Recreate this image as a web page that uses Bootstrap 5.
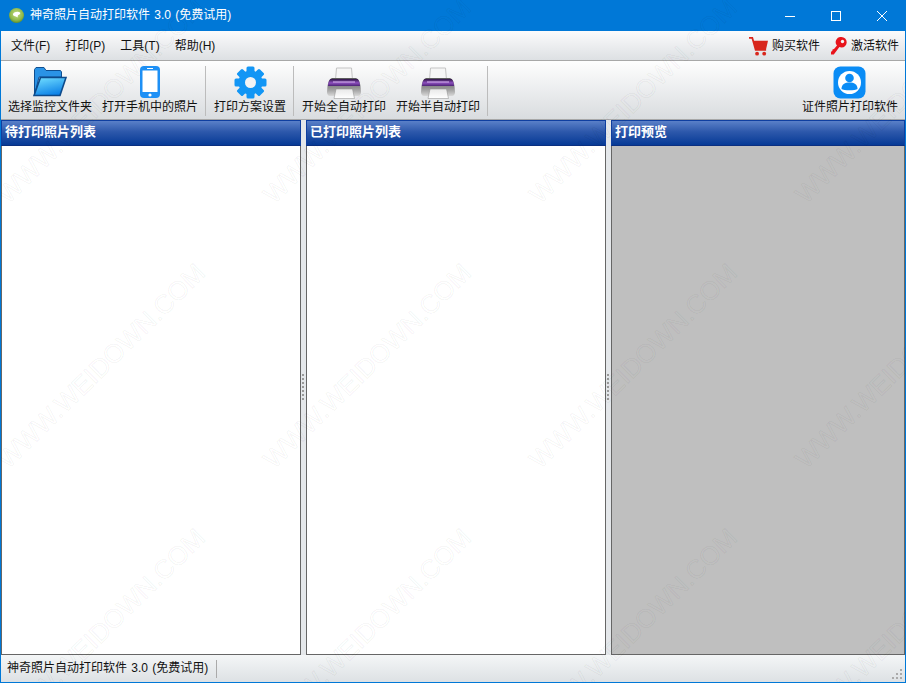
<!DOCTYPE html>
<html lang="zh"><head><meta charset="utf-8"><title>神奇照片自动打印软件</title>
<link href="https://cdn.jsdelivr.net/npm/bootstrap@5.3.0/dist/css/bootstrap.min.css" rel="stylesheet">
<style>
html,body{margin:0;height:683px;width:906px;overflow:hidden;background:#fff}
body{font-family:"Liberation Sans","Noto Sans CJK SC",sans-serif;font-size:12px;color:#111;line-height:1.2;word-spacing:1px}
.app-win{position:relative;width:906px;height:683px;background:#dfe3e6;border:solid #0078d7;border-width:0 1px 1px 1px;overflow:hidden}
.title-bar{flex:none;height:31px;background:#0078d7;color:#fff;margin:0 -1px;padding:0 1px 0 9px}
.title-bar svg{display:block}
.title-text{margin-left:6px}
.win-btn{width:46px;height:31px}
.menu-bar{flex:none;height:30px;background:linear-gradient(#fbfbfc,#dde0e3);border-bottom:1px solid #a8a8a8;padding:1px 6px 0 10px}
.menu-item{margin-right:15px}
.key-link{margin-left:11px}
.tool-bar{flex:none;height:59px;background:linear-gradient(#fefefe,#d9dcdf);border-bottom:1px solid #a8a8a8;padding-top:5px}
.tool-item{height:50px;white-space:nowrap;text-align:center}
.tool-item svg{display:block;height:33px;margin-bottom:1px}
.tool-a{padding:0 5px 0 7px}
.tool-b{padding:0 6px 0 5px}
.tool-c{padding:0 6px 0 7px}
.tool-d{padding:0 5px 0 7px}
.tool-e{padding:0 6px 0 5px}
.tool-f{padding:0 7px 0 7px}
.tool-sep{flex:none;width:1px;height:50px;background:#bcbcbc;margin:0 1px}
.panes{flex:none;height:535px}
.pane-box{flex:none;width:300px;height:535px}
.pane-wide{width:294px}
.pane-head{height:26px;background:linear-gradient(#5a80c8,#2d58ab 45%,#063a96);border:1px solid #0f3fa0;border-bottom:1px solid #0b2f80;color:#fff;font-weight:700;font-size:13px;padding-left:3px;line-height:21px}
.pane-body{height:509px;background:#fff;border:1px solid #666;border-top:0}
.pane-dark{background:#bfbfbf}
.split-bar{flex:none;width:5px;height:535px;background:#e4e7ea;padding-left:1px}
.grip-dot{width:2px;height:2px;background:#999;margin-bottom:2px}
.status-bar{flex:none;height:27px;background:linear-gradient(#f4f6f7,#dde1e4);padding-left:6px}
.status-sep{width:1px;height:18px;background:#aaa;margin-left:8px}
.resize-grip{position:absolute;right:2px;bottom:2px}
.mark-layer{position:absolute;left:-1px;top:0;width:906px;height:683px;pointer-events:none}
.mark-text{font-family:"Liberation Sans",sans-serif;font-size:26px;word-spacing:0;fill:none;stroke:rgba(0,0,0,.05);stroke-width:1}
</style></head><body>
<div class="app-win d-flex flex-column">
 <div class="title-bar d-flex align-items-center">
  <svg width="15" height="15" viewBox="0 0 15 15"><defs><radialGradient id="ball" cx=".5" cy=".4" r=".6"><stop offset="0" stop-color="#c8e08a"/><stop offset=".7" stop-color="#8fb94a"/><stop offset="1" stop-color="#5f8f2a"/></radialGradient></defs><circle cx="7.500" cy="7.500" r="7.500" fill="url(#ball)"/><path d="M4 6c1-2 5-3 7-1.500 1 1-1 2.500-2 2.500l-.5 2.500L7 8.500C5.500 8.500 3.500 7.500 4 6z" fill="#fff"/></svg>
  <span class="title-text flex-grow-1">神奇照片自动打印软件 3.0 (免费试用)</span>
  <div class="d-flex">
   <div class="win-btn d-flex align-items-center justify-content-center"><svg width="10" height="10"><path d="M0 5.500h10" stroke="#fff"/></svg></div>
   <div class="win-btn d-flex align-items-center justify-content-center"><svg width="10" height="10"><rect x=".5" y=".5" width="9" height="9" fill="none" stroke="#fff"/></svg></div>
   <div class="win-btn d-flex align-items-center justify-content-center"><svg width="10" height="10"><path d="M0 0l10 10M10 0L0 10" stroke="#fff"/></svg></div>
  </div>
 </div>
 <div class="menu-bar d-flex align-items-center">
  <span class="menu-item">文件(F)</span><span class="menu-item">打印(P)</span><span class="menu-item">工具(T)</span><span class="menu-item">帮助(H)</span>
  <span class="ms-auto d-flex align-items-center">
   <svg width="19" height="21" viewBox="0 0 20 21"><path d="M0 1.500h3.500L7 14h11" fill="none" stroke="#d8261c" stroke-width="1.800"/><path d="M4.500 4.500H20l-2 8.500H6.800z" fill="#d8261c"/><circle cx="8.500" cy="18" r="2" fill="#d8261c"/><circle cx="16" cy="18" r="2" fill="#d8261c"/></svg>
   <span class="ms-1">购买软件</span>
  </span>
  <span class="key-link d-flex align-items-center">
   <svg width="16" height="18" viewBox="0 0 16 18"><path d="M10.500 0a5.200 5.200 0 0 1 0 10.400c-.8 0-1.500-.2-2.100-.5L2.800 17.500H0l-.2-2.500 1.500-1 .2-1.500 1.500-.5L6 8.600A5.200 5.200 0 0 1 10.500 0z" fill="#e8141c"/><circle cx="11.500" cy="4.500" r="1.700" fill="#f4f4f4"/></svg>
   <span class="ms-1">激活软件</span>
  </span>
 </div>
 <div class="tool-bar d-flex">
  <div class="tool-item tool-a"><svg class="mx-auto" width="34" height="33" viewBox="0 0 34 33"><defs><linearGradient id="fg" x1=".2" y1="0" x2=".6" y2="1"><stop offset="0" stop-color="#6fdcff"/><stop offset="1" stop-color="#0a7fe6"/></linearGradient><linearGradient id="pg" x1="0" y1="0" x2="0" y2="1"><stop offset="0" stop-color="#5a5a5a"/><stop offset=".6" stop-color="#9a9a9a"/><stop offset="1" stop-color="#d8d8d8"/></linearGradient><linearGradient id="pp" x1="0" y1="0" x2="0" y2="1"><stop offset="0" stop-color="#2e1544"/><stop offset=".55" stop-color="#8d4fc0"/><stop offset="1" stop-color="#4d2474"/></linearGradient><linearGradient id="ps" x1="0" y1="0" x2="0" y2="1"><stop offset="0" stop-color="#e8e8e8"/><stop offset="1" stop-color="#fff"/></linearGradient></defs><path d="M1.500 29V3.500L3 1.500h8l2 3h14.500l1 1.500v5H6z" fill="#2a93e6" stroke="#0f4f90"/><path d="M7.500 11.500H33L27 29.500H1z" fill="url(#fg)" stroke="#0d4a8a" stroke-width="1.600"/></svg>选择监控文件夹</div>
  <div class="tool-item tool-b"><svg class="mx-auto" width="22" height="33" viewBox="0 0 22 33"><rect x="1" y="0" width="20" height="32" rx="4" fill="#1e90f5"/><rect x="3.500" y="4.500" width="15" height="21.500" fill="#fff"/><circle cx="11" cy="29" r="1.600" fill="#fff"/><rect x="8" y="2" width="6" height="1" fill="#fff"/></svg>打开手机中的照片</div>
  <div class="tool-sep"></div>
  <div class="tool-item tool-c"><svg class="mx-auto" width="33" height="33" viewBox="0 0 33 33"><g fill="#1296f5"><circle cx="16.500" cy="16.500" r="12"/><rect x="12.500" y=".5" width="8" height="32" rx="1.500"/><rect x="12.500" y=".5" width="8" height="32" rx="1.500" transform="rotate(45 16.500 16.500)"/><rect x="12.500" y=".5" width="8" height="32" rx="1.500" transform="rotate(90 16.500 16.500)"/><rect x="12.500" y=".5" width="8" height="32" rx="1.500" transform="rotate(135 16.500 16.500)"/></g><circle cx="16.500" cy="16.500" r="5.500" fill="#f2f3f4"/></svg>打印方案设置</div>
  <div class="tool-sep"></div>
  <div class="tool-item tool-d"><svg class="mx-auto" width="34" height="33" viewBox="0 0 34 33"><path d="M9.500 2h15l1 12H8.500z" fill="#f6f6f6" stroke="#c4c4c4"/><path d="M5 12h24c2.500 1 4 4 4.500 8l.5 6c0 2-1 4-3 4H3c-2 0-3-2-3-4l.5-6C1 16 2.500 13 5 12z" fill="url(#pg)"/><path d="M3.500 13h27c1.500 1 2.500 4 2.500 7H1c0-3 1-6 2.500-7z" fill="url(#pp)"/><path d="M6 16h22" stroke="#d9b8f0"/><path d="M9 23h16.500l2 9.500H7z" fill="url(#ps)" stroke="#8a8a8a" stroke-width=".5"/></svg>开始全自动打印</div>
  <div class="tool-item tool-e"><svg class="mx-auto" width="34" height="33" viewBox="0 0 34 33"><path d="M9.500 2h15l1 12H8.500z" fill="#f6f6f6" stroke="#c4c4c4"/><path d="M5 12h24c2.500 1 4 4 4.500 8l.5 6c0 2-1 4-3 4H3c-2 0-3-2-3-4l.5-6C1 16 2.500 13 5 12z" fill="url(#pg)"/><path d="M3.500 13h27c1.500 1 2.500 4 2.500 7H1c0-3 1-6 2.500-7z" fill="url(#pp)"/><path d="M6 16h22" stroke="#d9b8f0"/><path d="M9 23h16.500l2 9.500H7z" fill="url(#ps)" stroke="#8a8a8a" stroke-width=".5"/></svg>开始半自动打印</div>
  <div class="tool-sep"></div>
  <div class="tool-item tool-f ms-auto"><svg class="mx-auto" width="33" height="33" viewBox="0 0 33 33"><rect x=".5" y=".5" width="32" height="32" rx="7" fill="#0a8cf5"/><circle cx="16.500" cy="16.500" r="11.500" fill="#fff"/><circle cx="16.500" cy="12" r="4.300" fill="#0a8cf5"/><path d="M8.500 23c0-5 3.500-6.500 8-6.500s8 1.500 8 6.500c-2 1.800-14 1.800-16 0z" fill="#0a8cf5"/></svg>证件照片打印软件</div>
 </div>
 <div class="panes d-flex">
  <div class="pane-box"><div class="pane-head">待打印照片列表</div><div class="pane-body"></div></div>
  <div class="split-bar d-flex flex-column justify-content-center"><i class="grip-dot"></i><i class="grip-dot"></i><i class="grip-dot"></i><i class="grip-dot"></i><i class="grip-dot"></i><i class="grip-dot"></i><i class="grip-dot"></i></div>
  <div class="pane-box"><div class="pane-head">已打印照片列表</div><div class="pane-body"></div></div>
  <div class="split-bar d-flex flex-column justify-content-center"><i class="grip-dot"></i><i class="grip-dot"></i><i class="grip-dot"></i><i class="grip-dot"></i><i class="grip-dot"></i><i class="grip-dot"></i><i class="grip-dot"></i></div>
  <div class="pane-box pane-wide"><div class="pane-head">打印预览</div><div class="pane-body pane-dark"></div></div>
 </div>
 <div class="status-bar d-flex align-items-center"><span>神奇照片自动打印软件 3.0 (免费试用)</span><i class="status-sep"></i></div>
 <svg class="resize-grip" width="11" height="11"><g fill="#aaa"><rect x="8" y="0" width="2" height="2"/><rect x="4" y="4" width="2" height="2"/><rect x="8" y="4" width="2" height="2"/><rect x="0" y="8" width="2" height="2"/><rect x="4" y="8" width="2" height="2"/><rect x="8" y="8" width="2" height="2"/></g></svg>
 <svg class="mark-layer" width="906" height="683">
  <text class="mark-text" transform="translate(8 205) rotate(-44.500)">WWW.WEIDOWN.COM</text>
  <text class="mark-text" transform="translate(274 205) rotate(-44.500)">WWW.WEIDOWN.COM</text>
  <text class="mark-text" transform="translate(540 205) rotate(-44.500)">WWW.WEIDOWN.COM</text>
  <text class="mark-text" transform="translate(806 205) rotate(-44.500)">WWW.WEIDOWN.COM</text>
  <text class="mark-text" transform="translate(8 470) rotate(-44.500)">WWW.WEIDOWN.COM</text>
  <text class="mark-text" transform="translate(274 470) rotate(-44.500)">WWW.WEIDOWN.COM</text>
  <text class="mark-text" transform="translate(540 470) rotate(-44.500)">WWW.WEIDOWN.COM</text>
  <text class="mark-text" transform="translate(806 470) rotate(-44.500)">WWW.WEIDOWN.COM</text>
  <text class="mark-text" transform="translate(8 735) rotate(-44.500)">WWW.WEIDOWN.COM</text>
  <text class="mark-text" transform="translate(274 735) rotate(-44.500)">WWW.WEIDOWN.COM</text>
  <text class="mark-text" transform="translate(540 735) rotate(-44.500)">WWW.WEIDOWN.COM</text>
  <text class="mark-text" transform="translate(806 735) rotate(-44.500)">WWW.WEIDOWN.COM</text>
 </svg>
</div>
</body></html>
